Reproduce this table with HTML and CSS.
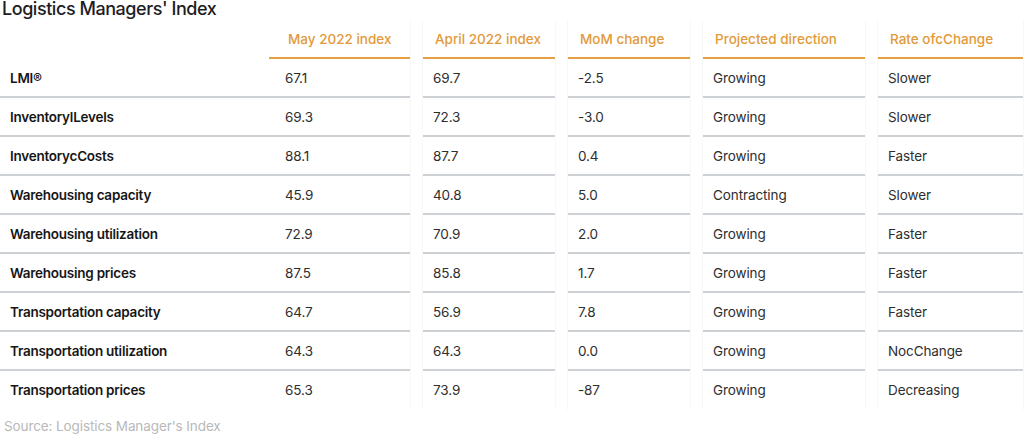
FILE: index.html
```html
<!DOCTYPE html>
<html lang="en">
<head>
<meta charset="utf-8">
<title>Logistics Managers' Index</title>
<link rel="stylesheet" href="styles.css">
</head>
<body>
<div class="page">
  <h1 class="title">Logistics Managers' Index</h1>
  <div class="table">
    <div class="row head">
      <div class="cell label"></div>
      <div class="cell c1">May 2022 index</div>
      <div class="cell g">April 2022 index</div>
      <div class="cell g">MoM change</div>
      <div class="cell g">Projected direction</div>
      <div class="cell g">Rate ofcChange</div>
    </div>
    <div class="row">
      <div class="cell label">LMI®</div>
      <div class="cell c1">67.1</div>
      <div class="cell g">69.7</div>
      <div class="cell g">-2.5</div>
      <div class="cell g">Growing</div>
      <div class="cell g">Slower</div>
    </div>
    <div class="row">
      <div class="cell label">InventorylLevels</div>
      <div class="cell c1">69.3</div>
      <div class="cell g">72.3</div>
      <div class="cell g">-3.0</div>
      <div class="cell g">Growing</div>
      <div class="cell g">Slower</div>
    </div>
    <div class="row">
      <div class="cell label">InventorycCosts</div>
      <div class="cell c1">88.1</div>
      <div class="cell g">87.7</div>
      <div class="cell g">0.4</div>
      <div class="cell g">Growing</div>
      <div class="cell g">Faster</div>
    </div>
    <div class="row">
      <div class="cell label">Warehousing capacity</div>
      <div class="cell c1">45.9</div>
      <div class="cell g">40.8</div>
      <div class="cell g">5.0</div>
      <div class="cell g">Contracting</div>
      <div class="cell g">Slower</div>
    </div>
    <div class="row">
      <div class="cell label">Warehousing utilization</div>
      <div class="cell c1">72.9</div>
      <div class="cell g">70.9</div>
      <div class="cell g">2.0</div>
      <div class="cell g">Growing</div>
      <div class="cell g">Faster</div>
    </div>
    <div class="row">
      <div class="cell label">Warehousing prices</div>
      <div class="cell c1">87.5</div>
      <div class="cell g">85.8</div>
      <div class="cell g">1.7</div>
      <div class="cell g">Growing</div>
      <div class="cell g">Faster</div>
    </div>
    <div class="row">
      <div class="cell label">Transportation capacity</div>
      <div class="cell c1">64.7</div>
      <div class="cell g">56.9</div>
      <div class="cell g">7.8</div>
      <div class="cell g">Growing</div>
      <div class="cell g">Faster</div>
    </div>
    <div class="row">
      <div class="cell label">Transportation utilization</div>
      <div class="cell c1">64.3</div>
      <div class="cell g">64.3</div>
      <div class="cell g">0.0</div>
      <div class="cell g">Growing</div>
      <div class="cell g">NocChange</div>
    </div>
    <div class="row last">
      <div class="cell label">Transportation prices</div>
      <div class="cell c1">65.3</div>
      <div class="cell g">73.9</div>
      <div class="cell g">-87</div>
      <div class="cell g">Growing</div>
      <div class="cell g">Decreasing</div>
    </div>
  </div>
  <p class="source">Source: Logistics Manager's Index</p>
</div>
</body>
</html>
```

FILE: styles.css
```css
html, body {
  margin: 0;
  padding: 0;
  background: #ffffff;
}

.page {
  width: 1024px;
  font-family: Inter, "Noto Sans", "Liberation Sans", sans-serif;
  color: #333;
}

.title {
  margin: 0;
  padding: 0 0 0 2px;
  font-size: 18px;
  line-height: 18px;
  font-weight: 500;
  color: #1d1d1f;
  letter-spacing: -0.45px;
  height: 20px;
}

.table {
  width: 1023px;
}

.row {
  display: grid;
  grid-template-columns: 269px 141px 145px 135px 175px 158px;
  height: 39px;
}

.cell {
  display: flex;
  align-items: center;
  font-size: 13.5px;
  color: #2e2e2e;
  border-bottom: 2px solid #cdd0d5;
  padding-left: 10px;
  white-space: nowrap;
  letter-spacing: -0.1px;
}

.cell.g {
  margin-left: 13px;
  box-shadow: -1px 0 0 #f8f8f9, 1px 0 0 #f8f8f9;
}

.cell.c1 {
  padding-left: 16px;
  box-shadow: 1px 0 0 #f8f8f9;
}

.cell.label {
  font-weight: 600;
  color: #161616;
  padding-left: 10px;
  letter-spacing: -0.25px;
}

.head {
  height: 39px;
}

.head .cell {
  color: #e19a3a;
  font-weight: 500;
  border-bottom-color: #e6a043;
  padding-left: 12px;
  padding-top: 0;
  letter-spacing: 0;
}

.head .cell.c1 {
  padding-left: 19px;
}

.head .cell.label {
  border-bottom-color: transparent;
}

.row.last .cell {
  border-bottom-color: transparent;
}

.source {
  margin: 6px 0 0 4px;
  font-size: 13.5px;
  line-height: 20px;
  color: #b9b9b9;
  font-weight: 400;
  letter-spacing: -0.1px;
}
```
